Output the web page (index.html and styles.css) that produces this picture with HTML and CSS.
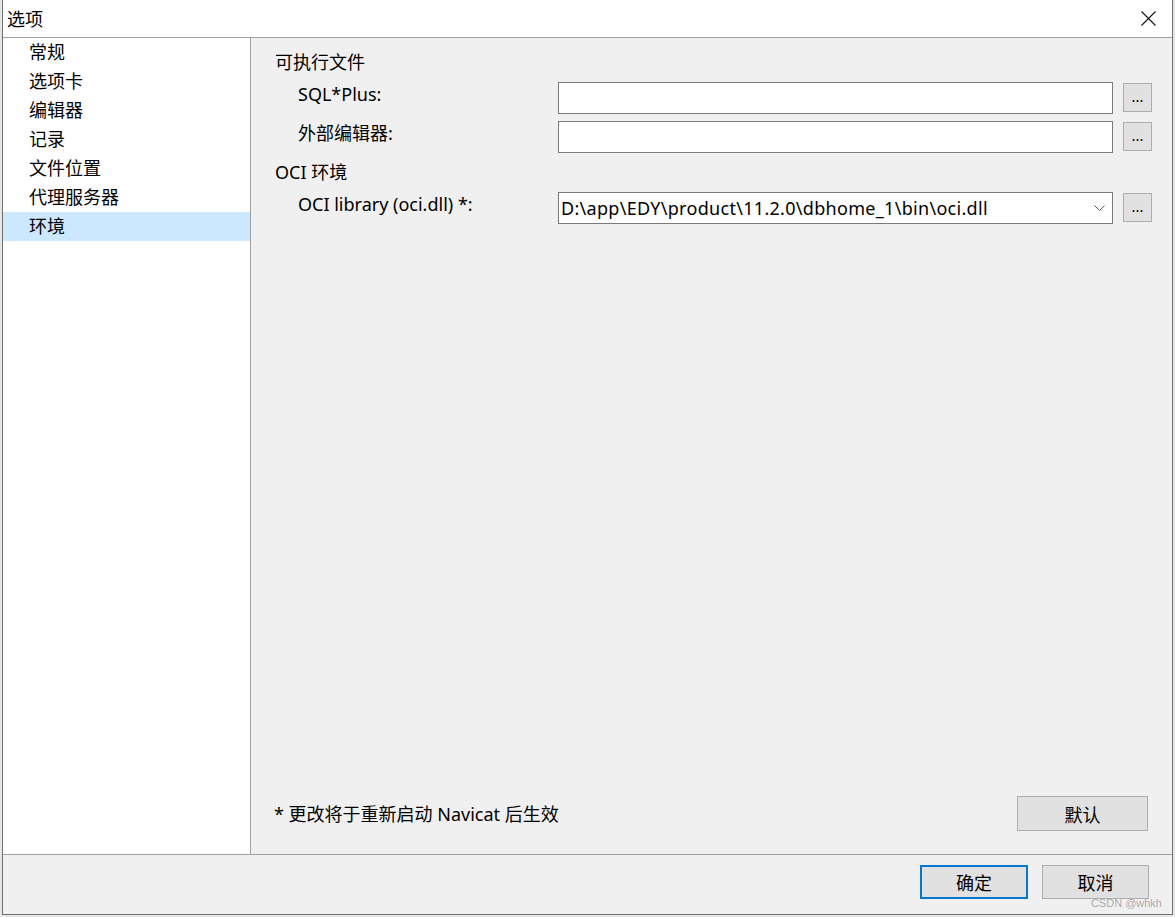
FILE: index.html
```html
<!DOCTYPE html>
<html lang="zh-CN">
<head>
<meta charset="utf-8">
<title>选项</title>
<link rel="stylesheet" href="styles.css">
</head>
<body>
<div class="dialog">
  <div class="titlebar">
    <span class="title">选项</span>
    <svg class="close" width="15" height="15" viewBox="0 0 15 15"><path d="M0.5 0.5 L14.5 14.5 M14.5 0.5 L0.5 14.5" stroke="#111" stroke-width="1.1" fill="none"/></svg>
  </div>
  <div class="main">
    <ul class="nav">
      <li class="nav-item">常规</li>
      <li class="nav-item">选项卡</li>
      <li class="nav-item">编辑器</li>
      <li class="nav-item">记录</li>
      <li class="nav-item">文件位置</li>
      <li class="nav-item">代理服务器</li>
      <li class="nav-item selected">环境</li>
    </ul>
    <div class="panel">
      <div class="group-title first">可执行文件</div>
      <div class="row">
        <span class="label">SQL*Plus:</span>
        <div class="input"></div>
        <div class="btn-dots">...</div>
      </div>
      <div class="row row-gap">
        <span class="label">外部编辑器:</span>
        <div class="input"></div>
        <div class="btn-dots">...</div>
      </div>
      <div class="group-title">OCI 环境</div>
      <div class="row">
        <span class="label">OCI library (oci.dll) *:</span>
        <div class="input combo">
          <span class="combo-text">D:\app\EDY\product\11.2.0\dbhome_1\bin\oci.dll</span>
          <svg class="chevron" width="11" height="6" viewBox="0 0 11 6"><path d="M0.5 0.5 L5.5 5.5 L10.5 0.5" stroke="#555" stroke-width="1" fill="none"/></svg>
        </div>
        <div class="btn-dots">...</div>
      </div>
      <div class="spacer"></div>
      <div class="panel-footer">
        <span class="note">* 更改将于重新启动 Navicat 后生效</span>
        <div class="btn btn-default">默认</div>
      </div>
    </div>
  </div>
  <div class="bottom">
    <div class="btn btn-ok">确定</div>
    <div class="btn btn-cancel">取消</div>
    <span class="watermark">CSDN @whkh</span>
  </div>
</div>
</body>
</html>
```
FILE: styles.css
```css
html, body {
  margin: 0;
  padding: 0;
}
body {
  background: #e6e6e6;
  width: 1175px;
  height: 917px;
  overflow: hidden;
  font-family: "Noto Sans", "Noto Sans CJK SC", sans-serif;
  font-size: 18px;
  color: #000;
}
.dialog {
  position: relative;
  margin-left: 2px;
  width: 1169px;
  height: 914px;
  border-left: 1px solid #707070;
  border-right: 1px solid #707070;
  border-bottom: 1px solid #707070;
  display: flex;
  flex-direction: column;
  background: #f0f0f0;
}
.titlebar {
  background: #fff;
  border-bottom: 1px solid #a0a0a0;
  display: flex;
  align-items: center;
  justify-content: space-between;
  padding: 0 16px 0 4px;
  box-sizing: border-box;
  flex: none;
  height: 38px;
}
.title {
  font-size: 18px;
  line-height: 24px;
}
.close {
  display: block;
}
.main {
  display: flex;
  height: 816px;
  flex: none;
  border-bottom: 1px solid #a0a0a0;
}
.nav {
  list-style: none;
  margin: 0;
  padding: 0;
  width: 247px;
  background: #fff;
  border-right: 1px solid #a0a0a0;
  flex: none;
}
.nav-item {
  height: 29px;
  line-height: 29px;
  padding-left: 26px;
}
.nav-item.selected {
  background: #cce8ff;
}
.panel {
  flex: 1;
  min-width: 0;
  display: flex;
  flex-direction: column;
  padding-left: 24px;
  padding-right: 20px;
}
.group-title {
  height: 24px;
  line-height: 24px;
  margin-top: 7px;
}
.group-title.first {
  margin-top: 12px;
}
.row {
  display: flex;
  align-items: center;
  height: 32px;
  margin-top: 8px;
}
.row-gap {
  margin-top: 7px;
}
.label {
  width: 260px;
  padding-left: 23px;
  line-height: 24px;
  flex: none;
  align-self: flex-start;
}
.input {
  width: 555px;
  height: 32px;
  box-sizing: border-box;
  border: 1px solid #7a7a7a;
  background: #fff;
  flex: none;
}
.combo {
  display: flex;
  align-items: center;
  justify-content: space-between;
  padding: 0 7px 0 2px;
}
.combo-text {
  line-height: 24px;
  letter-spacing: 0.3px;
}
.chevron {
  display: block;
}
.btn-dots {
  width: 29px;
  height: 29px;
  box-sizing: border-box;
  margin-left: 10px;
  margin-top: -2px;
  border: 1px solid #adadad;
  background: #e1e1e1;
  font-size: 15px;
  line-height: 24px;
  text-align: center;
  flex: none;
}
.spacer {
  flex: 1;
}
.panel-footer {
  display: flex;
  align-items: center;
  justify-content: space-between;
  padding-bottom: 23px;
  padding-right: 4px;
}
.note {
  margin-left: -1px;
  line-height: 24px;
}
.btn {
  box-sizing: border-box;
  border: 1px solid #adadad;
  background: #e1e1e1;
  display: flex;
  align-items: center;
  justify-content: center;
}
.btn-default {
  width: 131px;
  height: 35px;
}
.bottom {
  flex: 1;
  display: flex;
  justify-content: flex-end;
  align-items: flex-start;
  padding-top: 10px;
  padding-right: 23px;
  box-sizing: border-box;
  gap: 14px;
}
.btn-ok {
  width: 108px;
  height: 34px;
  border: 2px solid #0078d7;
}
.btn-cancel {
  width: 107px;
  height: 34px;
}
.watermark {
  position: absolute;
  right: 10px;
  bottom: 5px;
  font-family: "Liberation Sans", sans-serif;
  font-size: 11px;
  color: rgba(120, 120, 120, 0.6);
}
```
